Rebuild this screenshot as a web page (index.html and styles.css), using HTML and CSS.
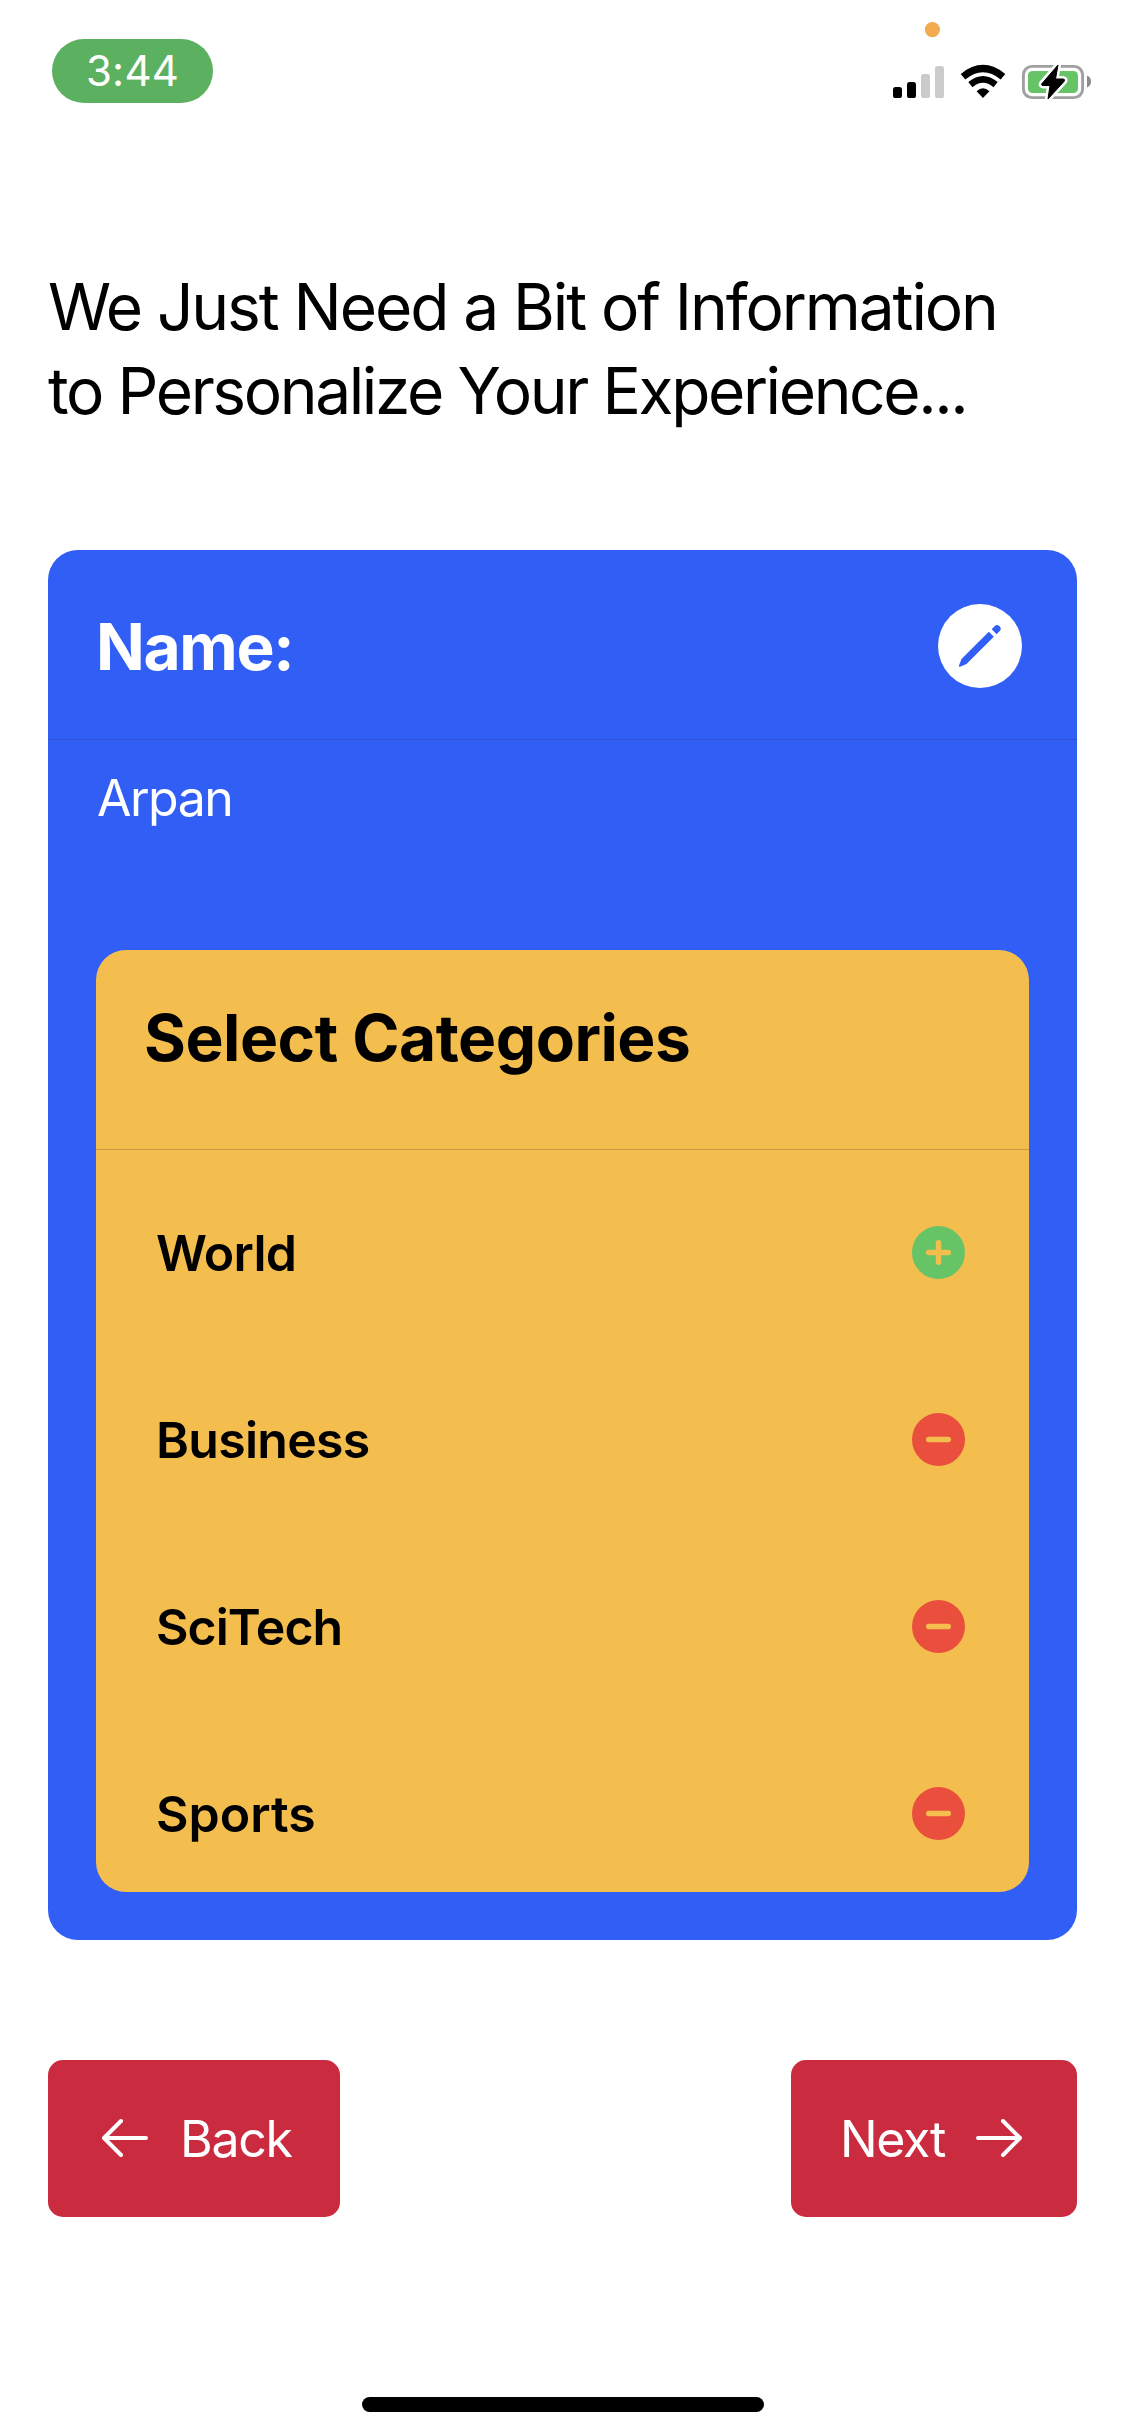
FILE: index.html
```html
<!DOCTYPE html>
<html lang="en">
<head>
<meta charset="utf-8">
<title>Personalize</title>
<link rel="stylesheet" href="styles.css">
</head>
<body>
<div class="status">
  <span class="time">3:44</span>
  <svg class="indicators" width="201" height="82" viewBox="890 20 201 82">
    <circle cx="932.4" cy="29.6" r="7.6" fill="#f2ab4e"/>
    <rect x="893" y="87" width="9" height="11" rx="2.6"/>
    <rect x="907" y="82" width="9" height="16" rx="2.6"/>
    <rect x="921" y="74" width="9" height="24" rx="2.6" fill="#cbcbcb"/>
    <rect x="935" y="66" width="9" height="32" rx="2.6" fill="#cbcbcb"/>
    <g fill="none" stroke="#000">
      <path d="M963 76.7Q983 60.300 1003 76.700" stroke-width="7.200"/>
      <path d="M970.400 84.600Q983 74.300 995.600 84.600" stroke-width="6.600"/>
    </g>
    <path d="M976.600 91.200Q983 85.400 989.400 91.200L983 98Z"/>
    <rect x="1023.400" y="66.400" width="59.200" height="31.200" rx="8.500" fill="none" stroke="#a0a0a0" stroke-width="2.900"/>
    <rect x="1028" y="71" width="50" height="22" rx="4.500" fill="#66c466"/>
    <path d="M1087 75.500Q1091 77 1091 81.500T1087 87.500Z" fill="#8c8c8c"/>
    <path d="M1058 65L1042 83.500Q1041 85.500 1043 85.500H1050L1048 99L1064 81.500Q1065.500 79 1063 79H1055.500Z" stroke="#fff" stroke-width="6" stroke-linejoin="round"/>
    <path d="M1058 65L1042 83.500Q1041 85.500 1043 85.500H1050L1048 99L1064 81.500Q1065.500 79 1063 79H1055.500Z" stroke="#000" stroke-linejoin="round"/>
  </svg>
</div>
<main>
  <h1>We Just Need a Bit of Information<br><span class="line2">to Personalize Your Experience...</span></h1>
  <section class="card">
    <header class="name-head">
      <h2>Name:</h2>
      <svg width="84" height="84" viewBox="0 0 84 84">
        <circle cx="42" cy="42" r="42" fill="#fff"/>
        <g fill="#315ef5">
          <path d="M21 61.500L23.500 55L50.800 27.700L55.800 32.700L28.500 60L22 62.800Q20.700 63 21 61.500Z"/>
          <path d="M53.700 25.300L56.800 22Q59 20 61.300 22.100Q63.800 24.400 62 26.800L58.600 30.200Z"/>
        </g>
      </svg>
    </header>
    <p class="name">Arpan</p>
    <div class="categories">
      <h2>Select Categories</h2>
      <ul>
        <li><span>World</span><svg width="53" height="53" viewBox="0 0 53 53"><circle cx="26.500" cy="26.500" r="26.500" fill="#66c466"/><path d="M16.700 26.500H36.300M26.500 16.700V36.300"/></svg></li>
        <li><span>Business</span><svg width="53" height="53" viewBox="0 0 53 53"><circle cx="26.500" cy="26.500" r="26.500" fill="#ea4f3d"/><path d="M16.700 26.500H36.300"/></svg></li>
        <li><span class="scitech">SciTech</span><svg width="53" height="53" viewBox="0 0 53 53"><circle cx="26.500" cy="26.500" r="26.500" fill="#ea4f3d"/><path d="M16.700 26.500H36.300"/></svg></li>
        <li><span class="sports">Sports</span><svg width="53" height="53" viewBox="0 0 53 53"><circle cx="26.500" cy="26.500" r="26.500" fill="#ea4f3d"/><path d="M16.700 26.500H36.300"/></svg></li>
      </ul>
    </div>
  </section>
  <nav>
    <button class="back"><svg width="46" height="38" viewBox="0 0 46 38"><path d="M44 19H2M19 2L2 19L19 36"/></svg><span>Back</span></button>
    <button class="next"><span>Next</span><svg width="46" height="38" viewBox="0 0 46 38"><path d="M2 19H44M27 2L44 19L27 36"/></svg></button>
  </nav>
</main>
<div class="home-bar"></div>
</body>
</html>
```
FILE: styles.css
```css
* { box-sizing: border-box; margin: 0; padding: 0; }
body {
  width: 1125px;
  height: 2436px;
  background: #fff;
  color: #000;
  font-family: Inter, "Liberation Sans", sans-serif;
  display: flex;
  flex-direction: column;
  overflow: hidden;
}
svg { display: block; flex: none; }
.status {
  height: 265px;
  padding: 20px 34px 0 52px;
  display: flex;
  justify-content: space-between;
  align-items: flex-start;
}
.time {
  width: 161px;
  height: 64px;
  margin-top: 19px;
  border-radius: 32px;
  background: #5cb160;
  color: #fff;
  font-size: 42px;
  line-height: 64px;
  text-align: center;
  letter-spacing: 0.2px;
}
main { padding: 0 48px; }
h1 {
  font-size: 64px;
  line-height: 84px;
  font-weight: 400;
  letter-spacing: -2.08px;
  white-space: nowrap;
}
.line2 { letter-spacing: -2.38px; }
h2 {
  font-size: 64px;
  line-height: 84px;
  font-weight: 700;
  letter-spacing: -1.3px;
  white-space: nowrap;
}
.card {
  margin-top: 117px;
  padding-bottom: 48px;
  border-radius: 30px;
  background: #315ef5;
}
.name-head {
  height: 190px;
  padding: 54px 55px 0 48px;
  border-bottom: 1px solid #3153cf;
  color: #fff;
  display: flex;
  justify-content: space-between;
  align-items: flex-start;
}
.name-head h2 { padding-top: 1px; }
.name {
  padding: 28px 49px 0;
  color: #fff;
  font-size: 50px;
  line-height: 60px;
  letter-spacing: -1.5px;
}
.categories {
  margin: 122px 48px 0;
  height: 942px;
  border-radius: 30px;
  background: #f4be4f;
}
.categories h2 {
  height: 200px;
  padding: 46px 48px 0;
  border-bottom: 1px solid #c99d41;
  letter-spacing: -0.5px;
}
ul {
  list-style: none;
  padding: 73px 64px 48px 60px;
  display: flex;
  flex-direction: column;
  gap: 127px;
}
li {
  height: 60px;
  display: flex;
  justify-content: space-between;
  align-items: center;
  font-size: 50px;
  line-height: 60px;
  font-weight: 600;
  letter-spacing: -0.7px;
}
li svg { margin-bottom: 1px; }
.scitech { letter-spacing: -1px; }
.sports { letter-spacing: 0; }
li path { stroke: #f4be4f; stroke-width: 5.4; stroke-linecap: round; }
nav {
  margin-top: 120px;
  display: flex;
  justify-content: space-between;
}
button {
  height: 157px;
  border: 0;
  border-radius: 15px;
  background: #ca2b3f;
  color: #fff;
  font: 400 50px/60px Inter, "Liberation Sans", sans-serif;
  letter-spacing: -1.3px;
  display: flex;
  align-items: center;
}
button svg { margin-bottom: 1px; }
button path { fill: none; stroke: #fff; stroke-width: 4; stroke-linecap: round; stroke-linejoin: round; }
.back { width: 292px; padding-left: 54px; gap: 32px; }
.next { width: 286px; padding: 0 55px 0 49px; justify-content: space-between; }
.home-bar {
  width: 402px;
  height: 15px;
  margin: 180px auto 0;
  border-radius: 8px;
  background: #000;
}
```
